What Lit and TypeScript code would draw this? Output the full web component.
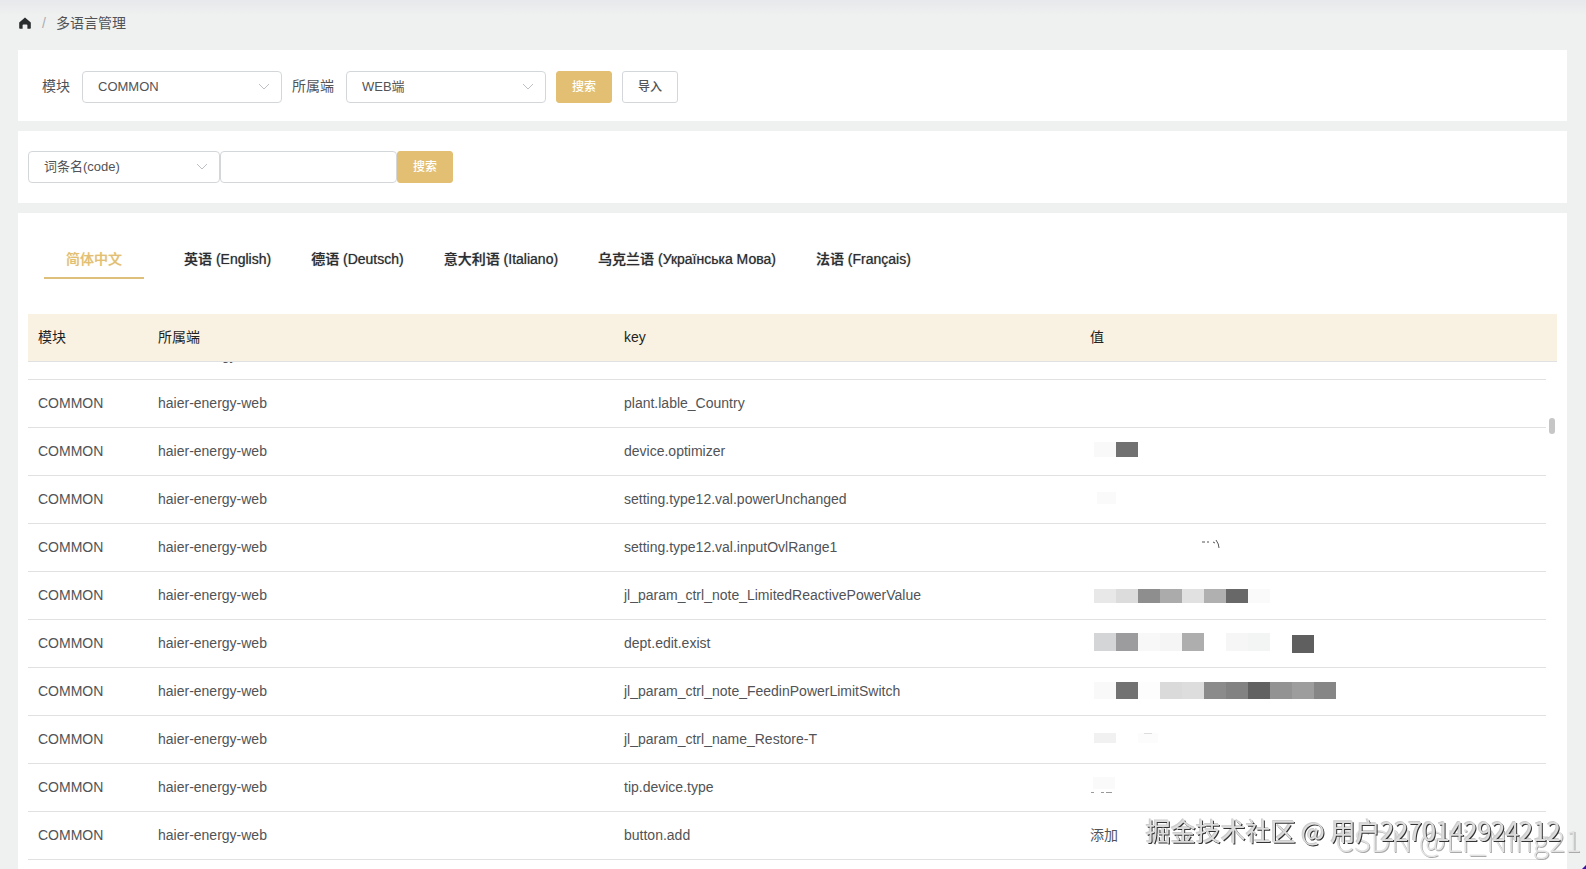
import { LitElement, html, svg, css } from "lit";
import { customElement, query } from "lit/decorators.js";

type Block = { x: number; y: number; w: number; h: number; c: string };

interface Entry {
  key: string;
  value?: string;
  blocks?: Block[];
  marks?: string;
}

const run = (x: number, y: number, h: number, colors: string[]): Block[] =>
  colors.map((c, i) => ({ x: x + i * 22, y, w: 22, h, c })).filter((b) => b.c !== "");

const entries: Entry[] = [
  { key: "" },
  { key: "plant.lable_Country" },
  { key: "device.optimizer", blocks: run(4, 14, 15, ["#f9f9f9", "#717171"]) },
  { key: "setting.type12.val.powerUnchanged", blocks: [{ x: 7, y: 16, w: 19, h: 12, c: "#fafafa" }] },
  {
    key: "setting.type12.val.inputOvlRange1",
    marks: "M112 18h3M117 18h2M123 18l2 1M126 16q3 4 3 8",
  },
  {
    key: "jl_param_ctrl_note_LimitedReactivePowerValue",
    blocks: run(4, 17, 14, ["#e8e8e8", "#dcdcdc", "#8e8e8e", "#ababab", "#e1e1e1", "#b0b0b0", "#686868", "#fafafa"]),
  },
  {
    key: "dept.edit.exist",
    blocks: [
      ...run(4, 13, 18, ["#d4d5d6", "#9c9c9e", "#f8f8f8", "#f5f5f5", "#aeaeae", "", "#f6f6f6", "#f3f4f4"]),
      ...run(202, 15, 18, ["#5f5f5f"]),
    ],
  },
  {
    key: "jl_param_ctrl_note_FeedinPowerLimitSwitch",
    blocks: run(4, 14, 17, ["#f9f9f9", "#727272", "#fdfdfd", "#dadada", "#dddddd", "#8b8b8b", "#828282", "#616161", "#939393", "#9d9d9d", "#868686"]),
  },
  {
    key: "jl_param_ctrl_name_Restore-T",
    blocks: [
      { x: 4, y: 17, w: 22, h: 10, c: "#f1f1f1" },
      { x: 48, y: 17, w: 20, h: 10, c: "#fcfcfc" },
      { x: 54, y: 17, w: 8, h: 1, c: "#dddddd" },
    ],
  },
  {
    key: "tip.device.type",
    blocks: [
      { x: 3, y: 13, w: 22, h: 12, c: "#fafafa" },
      { x: 1, y: 28, w: 3, h: 1, c: "#9a9a9a" },
      { x: 11, y: 28, w: 3, h: 1, c: "#9a9a9a" },
      { x: 16, y: 28, w: 6, h: 1, c: "#9a9a9a" },
    ],
  },
  { key: "button.add", value: "添加" },
  { key: "" },
];

const tabs = ["简体中文", "英语 (English)", "德语 (Deutsch)", "意大利语 (Italiano)", "乌克兰语 (Українська Мова)", "法语 (Français)"];

@customElement("app-root")
export class AppRoot extends LitElement {
  static styles = css`
    :host {
      display: flex;
      flex-direction: column;
      gap: 10px;
      position: relative;
      box-sizing: border-box;
      height: 100vh;
      overflow: hidden;
      padding: 0 19px 0 18px;
      background: linear-gradient(#e7e8eb, #eff1f1 16px);
      font-family: "Liberation Sans", "Noto Sans CJK SC", sans-serif;
      font-size: 14px;
      line-height: 20px;
      color: #515356;
    }
    * {
      box-sizing: border-box;
    }
    .crumbs {
      display: flex;
      align-items: center;
      height: 40px;
      padding-top: 6px;
    }
    .home {
      display: block;
      width: 14px;
      height: 14px;
    }
    .home svg {
      display: block;
    }
    .slash {
      width: 24px;
      text-align: center;
      color: #a9adb0;
    }
    .card {
      display: flex;
      align-items: center;
      background: #fff;
    }
    .filters {
      padding: 21px 24px 18px;
    }
    .lookup {
      padding: 20px 10px;
    }
    .label {
      margin-right: 12px;
      padding-bottom: 2px;
    }
    .pick {
      position: relative;
      display: block;
      width: 200px;
      margin-right: 10px;
    }
    .pick.code {
      width: 192px;
      margin-right: 0;
    }
    .select,
    .text {
      display: block;
      width: 100%;
      height: 32px;
      margin: 0;
      padding: 0 30px 0 15px;
      border: 1px solid #d4d7da;
      border-radius: 4px;
      outline: none;
      background: #fff;
      appearance: none;
      font: inherit;
      font-size: 13px;
      color: #515356;
    }
    .text {
      width: 177px;
    }
    .chevron {
      position: absolute;
      top: 12px;
      right: 12px;
      pointer-events: none;
    }
    .btn {
      width: 56px;
      height: 32px;
      margin: 0 10px 0 0;
      padding: 0;
      border: 1px solid #d4d7da;
      border-radius: 3px;
      background: #fff;
      font: inherit;
      font-size: 12px;
      font-weight: 500;
      color: #515356;
    }
    .btn.primary {
      border-color: #e2bf72;
      background: #e2bf72;
      color: #fff;
    }
    .list {
      flex: 1;
      flex-direction: column;
      align-items: stretch;
      min-height: 0;
      padding: 26px 10px 0;
    }
    .tabs {
      display: flex;
      gap: 40px;
      margin-bottom: 35px;
      padding: 0 16px;
    }
    .tab {
      height: 40px;
      padding: 2px 0 0;
      border: 0;
      border-bottom: 2px solid transparent;
      background: none;
      font: inherit;
      font-weight: 500;
      line-height: 36px;
      color: #2b2d30;
      text-shadow: 0 0 1px #2b2d3099;
    }
    .tab.active {
      width: 100px;
      border-color: #dfc07a;
      color: #e2bf72;
      text-shadow: 0 0 1px #e2bf7299;
    }
    .frame {
      position: relative;
      flex: 1;
      min-height: 0;
    }
    .scroller {
      height: 100%;
      overflow-y: auto;
      scrollbar-width: none;
    }
    .thumb {
      position: absolute;
      top: 104px;
      right: 2px;
      width: 6px;
      height: 16px;
      border-radius: 3px;
      background: #c6c6c6;
    }
    .table {
      width: 100%;
      table-layout: fixed;
      border-collapse: separate;
      border-spacing: 0;
    }
    th,
    td {
      height: 48px;
      padding: 0 10px 2px;
      border-bottom: 1px solid #dfe1e2;
      text-align: left;
      font-weight: 400;
    }
    th {
      position: sticky;
      top: 0;
      background: #f9f2e2;
      color: #1f1f1f;
    }
    .module {
      width: 120px;
    }
    .gutter {
      width: 11px;
      padding: 0;
    }
    .masked {
      padding-block: 0;
    }
    .masked svg {
      display: block;
    }
    .mark {
      position: absolute;
      white-space: nowrap;
      font-family: "Noto Sans CJK SC", sans-serif;
      pointer-events: none;
    }
    .mark.user {
      right: 25px;
      bottom: 19px;
      font-size: 25px;
      line-height: 40px;
      color: #dcdcdc;
      text-shadow: 1px 1px 0 #333, -1px -1px 0 #ccc;
    }
    .mark.site {
      right: 5px;
      bottom: 10px;
      font-size: 30px;
      font-weight: 300;
      line-height: 40px;
      color: #e2e2e2;
      text-shadow: 1px 1px 0 #aaa;
    }
    .corner {
      position: absolute;
      right: 0;
      bottom: 0;
      display: block;
    }
  `;

  @query(".scroller") scroller!: HTMLElement;

  firstUpdated() {
    this.scroller.scrollTop = 30;
  }

  chevron() {
    return html`<svg class="chevron" width="12" height="8" viewBox="0 0 12 8" fill="none" stroke="#bcc0c6" aria-hidden="true">
      <path d="M1 1l5 5 5-5" />
    </svg>`;
  }

  cell(e: Entry) {
    if (!e.blocks && !e.marks) return html`<td>${e.value ?? ""}</td>`;
    return html`<td class="masked">
      <svg width="260" height="47" aria-hidden="true">
        ${(e.blocks ?? []).map((b) => svg`<rect x=${b.x} y=${b.y} width=${b.w} height=${b.h} fill=${b.c} />`)}
        ${e.marks ? svg`<path d=${e.marks} fill="none" stroke="#555" />` : ""}
      </svg>
    </td>`;
  }

  render() {
    return html`
      <nav class="crumbs" aria-label="breadcrumb">
        <a class="home" href="#" aria-label="首页">
          <svg width="14" height="14" viewBox="0 0 14 14" fill="#2a2d2e">
            <path d="M7 1.4L1.2 6.4V12q0 .8.8.8h2.6V9.2q0-.8.8-.8h3.2q.8 0 .8.8v3.6H12q.8 0 .8-.8V6.4z" />
          </svg>
        </a>
        <span class="slash">/</span>
        <span>多语言管理</span>
      </nav>

      <form class="card filters">
        <label class="label" for="module">模块</label>
        <span class="pick">
          <select class="select" id="module"><option>COMMON</option></select>
          ${this.chevron()}
        </span>
        <label class="label" for="end">所属端</label>
        <span class="pick">
          <select class="select" id="end"><option>WEB端</option></select>
          ${this.chevron()}
        </span>
        <button class="btn primary" type="button">搜索</button>
        <button class="btn" type="button">导入</button>
      </form>

      <form class="card lookup">
        <span class="pick code">
          <select class="select" aria-label="词条名"><option>词条名(code)</option></select>
          ${this.chevron()}
        </span>
        <input class="text" type="text" aria-label="词条名(code)" />
        <button class="btn primary" type="button">搜索</button>
      </form>

      <section class="card list">
        <div class="tabs" role="tablist">
          ${tabs.map(
            (t, i) => html`<button class="tab ${i === 0 ? "active" : ""}" role="tab" aria-selected=${i === 0}>${t}</button>`
          )}
        </div>
        <div class="frame">
          <div class="scroller">
            <table class="table">
              <thead>
                <tr>
                  <th class="module">模块</th>
                  <th>所属端</th>
                  <th>key</th>
                  <th>值</th>
                  <th class="gutter"></th>
                </tr>
              </thead>
              <tbody>
                ${entries.map(
                  (e) => html`<tr>
                    <td>COMMON</td>
                    <td>haier-energy-web</td>
                    <td>${e.key}</td>
                    ${this.cell(e)}
                  </tr>`
                )}
              </tbody>
            </table>
          </div>
          <span class="thumb"></span>
        </div>
      </section>

      <span class="mark site">CSDN @Li_Ning21</span>
      <span class="mark user">掘金技术社区 @ 用户2270142924212</span>
      <svg class="corner" width="4" height="4" aria-hidden="true"><path d="M4 0v4H0z" fill="#3a10a8" /></svg>
    `;
  }
}
